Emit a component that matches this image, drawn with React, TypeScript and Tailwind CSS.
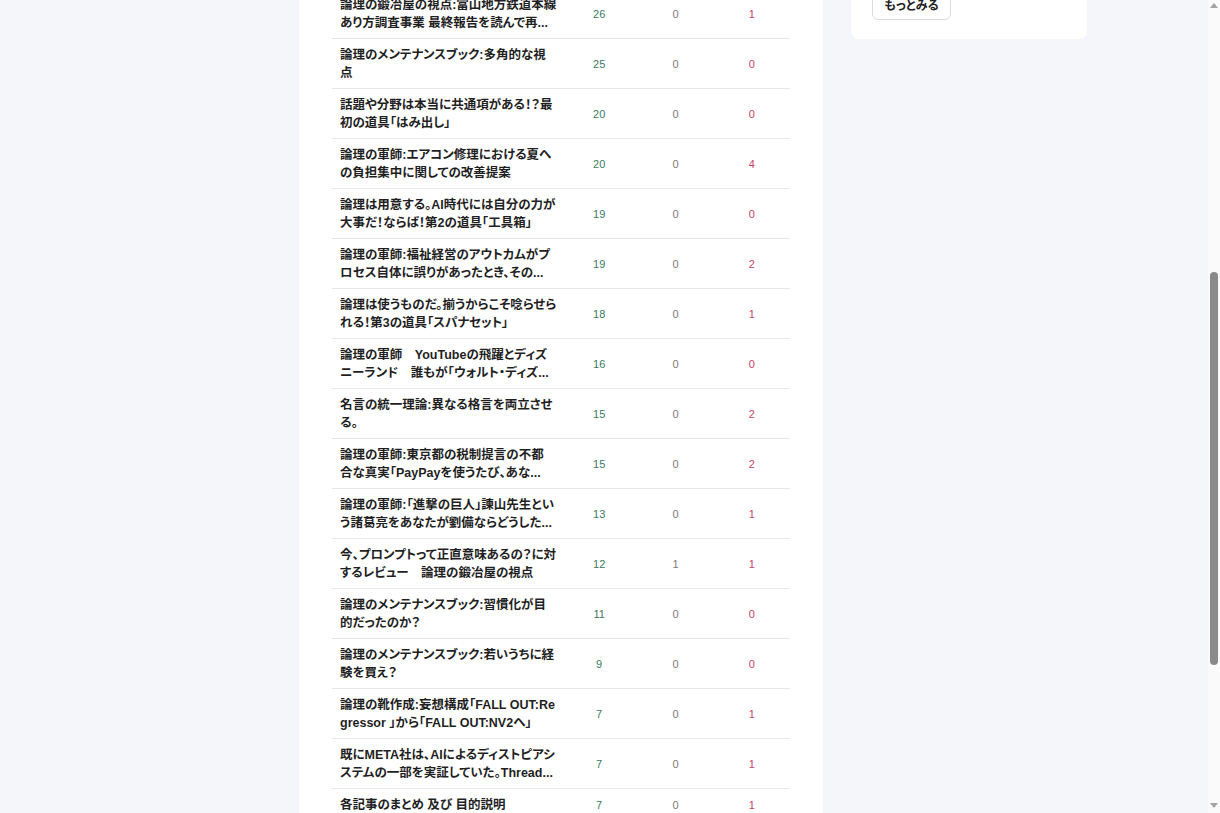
import React from "react";

// Article stats row
type ArticleRow = {
  lines: string[];
  views: number;
  comments: number;
  likes: number;
};

const rows: ArticleRow[] = [
  { lines: ["論理の鍛冶屋の視点:富山地方鉄道本線", "あり方調査事業 最終報告を読んで再..."], views: 26, comments: 0, likes: 1 },
  { lines: ["論理のメンテナンスブック:多角的な視", "点"], views: 25, comments: 0, likes: 0 },
  { lines: ["話題や分野は本当に共通項がある！？最", "初の道具「はみ出し」"], views: 20, comments: 0, likes: 0 },
  { lines: ["論理の軍師:エアコン修理における夏へ", "の負担集中に関しての改善提案"], views: 20, comments: 0, likes: 4 },
  { lines: ["論理は用意する。AI時代には自分の力が", "大事だ！ならば！第2の道具「工具箱」"], views: 19, comments: 0, likes: 0 },
  { lines: ["論理の軍師:福祉経営のアウトカムがプ", "ロセス自体に誤りがあったとき、その..."], views: 19, comments: 0, likes: 2 },
  { lines: ["論理は使うものだ。揃うからこそ唸らせら", "れる！第3の道具「スパナセット」"], views: 18, comments: 0, likes: 1 },
  { lines: ["論理の軍師　YouTubeの飛躍とディズ", "ニーランド　誰もが「ウォルト・ディズ..."], views: 16, comments: 0, likes: 0 },
  { lines: ["名言の統一理論:異なる格言を両立させ", "る。"], views: 15, comments: 0, likes: 2 },
  { lines: ["論理の軍師:東京都の税制提言の不都", "合な真実「PayPayを使うたび、あな..."], views: 15, comments: 0, likes: 2 },
  { lines: ["論理の軍師:「進撃の巨人」諫山先生とい", "う諸葛亮をあなたが劉備ならどうした..."], views: 13, comments: 0, likes: 1 },
  { lines: ["今、プロンプトって正直意味あるの？に対", "するレビュー　論理の鍛冶屋の視点"], views: 12, comments: 1, likes: 1 },
  { lines: ["論理のメンテナンスブック:習慣化が目", "的だったのか？"], views: 11, comments: 0, likes: 0 },
  { lines: ["論理のメンテナンスブック:若いうちに経", "験を買え？"], views: 9, comments: 0, likes: 0 },
  { lines: ["論理の靴作成:妄想構成「FALL OUT:Re", "gressor 」から「FALL OUT:NV2へ」"], views: 7, comments: 0, likes: 1 },
  { lines: ["既にMETA社は、AIによるディストピアシ", "ステムの一部を実証していた。Thread..."], views: 7, comments: 0, likes: 1 },
  { lines: ["各記事のまとめ 及び 目的説明"], views: 7, comments: 0, likes: 1 },
];

const Scrollbar = () => (
  <div className="w-[12px] shrink-0 bg-[#fafafa] flex flex-col items-center">
    {/* Up arrow */}
    <svg width="8" height="12" viewBox="0 0 8 12" className="shrink-0">
      <path d="M0 8 L4 3 L8 8 Z" fill="#a3a3a3" />
    </svg>
    {/* Thumb */}
    <div className="mt-[260px] h-[393px] w-[8px] rounded-full bg-[#8a8a8a]" />
    <div className="flex-1" />
    {/* Down arrow */}
    <svg width="8" height="12" viewBox="0 0 8 12" className="shrink-0 mb-[1px]">
      <path d="M0 3 L8 3 L4 8 Z" fill="#a3a3a3" />
    </svg>
  </div>
);

const App = () => {
  return (
    <div className="h-[813px] w-[1220px] overflow-hidden flex bg-[#f4f6f9] font-['Liberation_Sans','Noto_Sans_CJK_JP',sans-serif] [font-feature-settings:'palt']">
      <div className="flex-1 flex items-start pl-[299px] gap-[28px]">
        {/* Main column */}
        <main className="w-[524px] h-full bg-white px-[33px] overflow-hidden">
          <div className="-mt-[11px]">
            {rows.map((row, i) => (
              <div
                key={i}
                className="grid grid-cols-[229px_1fr_1fr_1fr] items-center border-b border-[#e6e6e6] pt-[7px] pb-[6px]"
              >
                <div className="pl-[8px] text-[12.5px] leading-[18px] font-bold text-[#1f1f1f]">
                  {row.lines.map((line, j) => (
                    <div key={j} className="whitespace-nowrap">
                      {line}
                    </div>
                  ))}
                </div>
                <div className="text-center text-[11px] text-[#3a7a60]">{row.views}</div>
                <div className="text-center text-[11px] text-[#7a7a7a]">{row.comments}</div>
                <div className="text-center text-[11px] text-[#c8436a]">{row.likes}</div>
              </div>
            ))}
          </div>
        </main>

        {/* Sidebar */}
        <aside className="w-[236px] -mt-[20px] bg-white rounded-lg px-[21px] pt-[12px] pb-[19px]">
          <button className="h-[28px] w-[79px] rounded-md border border-[#dcdcdc] bg-white text-[12px] font-bold text-[#222] flex items-center justify-center">
            もっとみる
          </button>
        </aside>
      </div>
      <Scrollbar />
    </div>
  );
};

export default App;
